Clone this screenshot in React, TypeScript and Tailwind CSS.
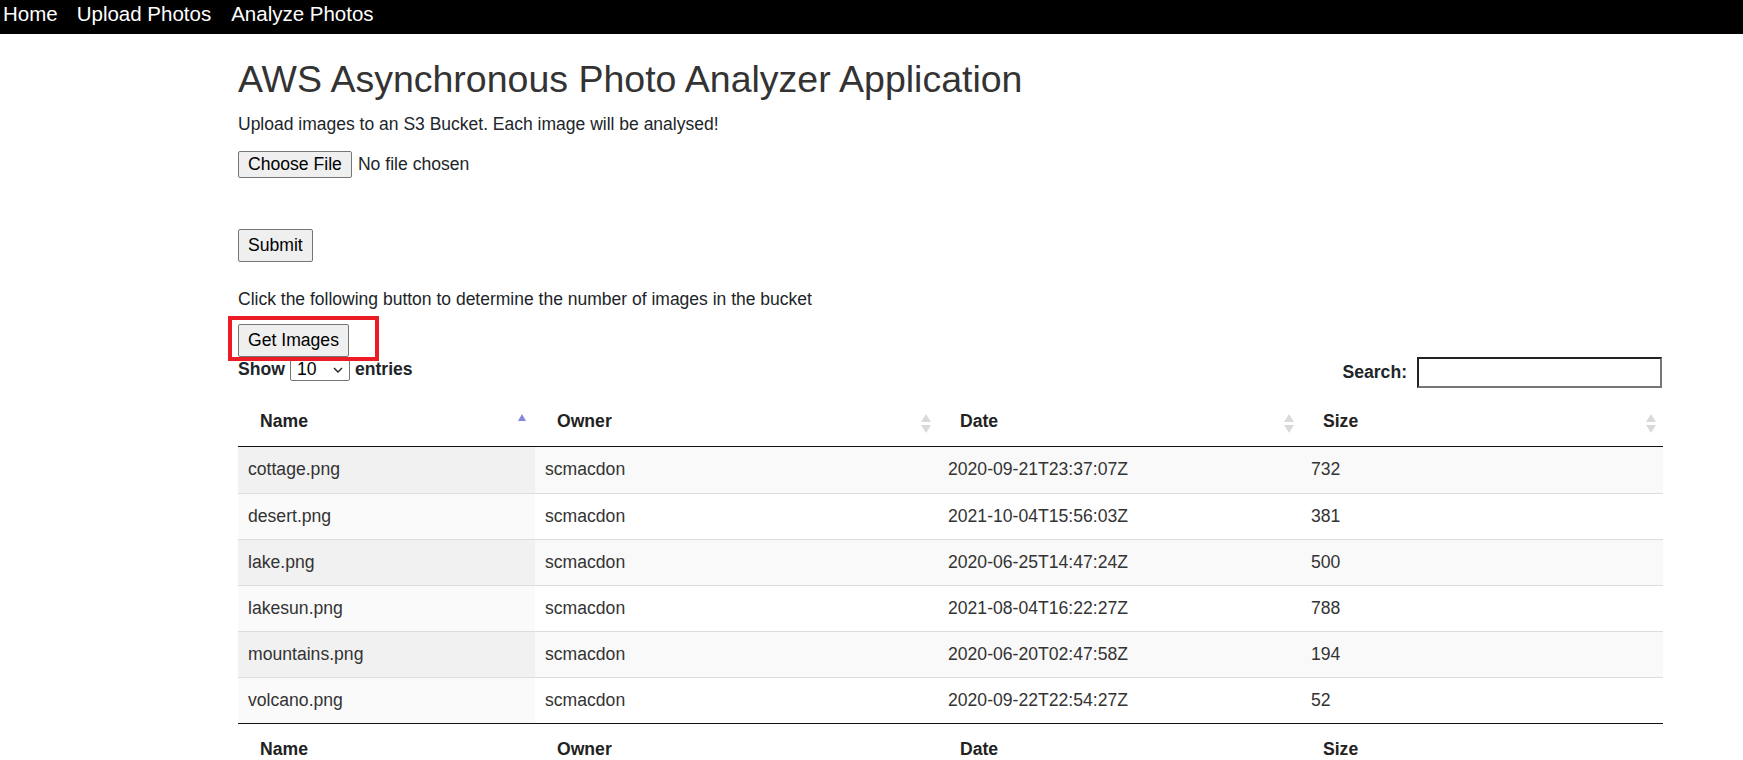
import React from "react";

type Photo = {
  name: string;
  owner: string;
  date: string;
  size: string;
};

const photos: Photo[] = [
  { name: "cottage.png", owner: "scmacdon", date: "2020-09-21T23:37:07Z", size: "732" },
  { name: "desert.png", owner: "scmacdon", date: "2021-10-04T15:56:03Z", size: "381" },
  { name: "lake.png", owner: "scmacdon", date: "2020-06-25T14:47:24Z", size: "500" },
  { name: "lakesun.png", owner: "scmacdon", date: "2021-08-04T16:22:27Z", size: "788" },
  { name: "mountains.png", owner: "scmacdon", date: "2020-06-20T02:47:58Z", size: "194" },
  { name: "volcano.png", owner: "scmacdon", date: "2020-09-22T22:54:27Z", size: "52" },
];

function SortBoth() {
  return (
    <svg className="absolute right-[7px] top-[13px]" width="10" height="19" viewBox="0 0 10 19">
      <polygon points="5,0 10,8 0,8" fill="#dadada" />
      <polygon points="0,11 10,11 5,19" fill="#dadada" />
    </svg>
  );
}

function SortAsc() {
  return (
    <svg className="absolute right-[9px] top-[13px]" width="8" height="7" viewBox="0 0 8 7">
      <polygon points="4,0 8,7 0,7" fill="#8487dc" />
    </svg>
  );
}

function Btn({ children, className = "" }: { children: React.ReactNode; className?: string }) {
  return (
    <button
      className={
        "rounded-[2px] border border-[#767676] bg-[#efefef] px-[9px] text-[17.6px] leading-[21px] text-black " +
        className
      }
    >
      {children}
    </button>
  );
}

export default function App() {
  const headers = ["Name", "Owner", "Date", "Size"];

  return (
    <div className="min-h-screen bg-white font-['Liberation_Sans',Arial,sans-serif] text-[#212529]">
      <nav className="flex h-[34px] items-start bg-black pt-[2px] text-[20.5px] leading-[23px] text-white">
        <a className="ml-[3px]" href="#">Home</a>
        <a className="ml-[19px]" href="#">Upload Photos</a>
        <a className="ml-[20px]" href="#">Analyze Photos</a>
      </nav>

      <main className="ml-[238px] w-[1425px]">
        <h1 className="mt-[25px] text-[37.5px] font-normal leading-[40px] text-[#333]">
          AWS Asynchronous Photo Analyzer Application
        </h1>
        <p className="mt-[15px] text-[17.5px] leading-[21px]">
          Upload images to an S3 Bucket. Each image will be analysed!
        </p>

        <div className="mt-[16px] flex items-center text-[17.6px] leading-[21px]">
          <Btn className="py-[2px]">Choose File</Btn>
          <span className="ml-[6px]">No file chosen</span>
        </div>

        <div className="mt-[51px]">
          <Btn className="py-[5px]">Submit</Btn>
        </div>

        <p className="mt-[27px] text-[17.5px] leading-[21px]">
          Click the following button to determine the number of images in the bucket
        </p>

        <div className="relative mt-[14px] inline-block">
          <Btn className="py-[5px]">Get Images</Btn>
          <div className="pointer-events-none absolute -bottom-[4px] -left-[10px] -right-[30px] -top-[8px] border-4 border-[#ec1c24]" />
        </div>

        <div className="flex items-start justify-between text-[17.6px] leading-[21px]">
          <div className="mt-[1px] flex items-center font-bold">
            <span>Show</span>
            <div className="ml-[5px] flex h-[23px] w-[60px] items-center justify-between rounded-[2px] border border-[#767676] bg-white pl-[6px] pr-[6px] font-normal text-black">
              <span>10</span>
              <svg width="10" height="6" viewBox="0 0 10 6">
                <polyline points="1,1 5,5 9,1" fill="none" stroke="#222" strokeWidth="1.4" />
              </svg>
            </div>
            <span className="ml-[5px]">entries</span>
          </div>
          <div className="flex items-center font-bold">
            <label>Search:</label>
            <input
              className="ml-[10px] mr-[1px] h-[31px] w-[245px] border-2 border-b-[#767676] border-l-[#222] border-r-[#767676] border-t-[#222] bg-white outline-none"
              type="text"
            />
          </div>
        </div>

        <table className="mt-[13px] w-full table-fixed border-collapse text-[17.6px] leading-[21px] text-[#333]">
          <colgroup>
            <col className="w-[297px]" />
            <col className="w-[403px]" />
            <col className="w-[363px]" />
            <col className="w-[362px]" />
          </colgroup>
          <thead>
            <tr>
              {headers.map((h, i) => (
                <th
                  key={h}
                  className="relative border-b border-[#111] pb-[15px] pl-[22px] pt-[10px] text-left font-bold leading-[20px] text-[#222]"
                >
                  {h}
                  {i === 0 ? <SortAsc /> : <SortBoth />}
                </th>
              ))}
            </tr>
          </thead>
          <tbody>
            {photos.map((p, i) => {
              const odd = i % 2 === 0;
              const border = i === 0 ? "" : "border-t border-[#ddd]";
              const pad = i === 0 ? "px-[10px] pt-[12px] pb-[13px]" : "px-[10px] py-[12px]";
              const rest = odd ? "bg-[#f9f9f9]" : "bg-white";
              return (
                <tr key={p.name}>
                  <td className={`${border} ${odd ? "bg-[#f1f1f1]" : "bg-[#fafafa]"} ${pad}`}>{p.name}</td>
                  <td className={`${border} ${rest} ${pad}`}>{p.owner}</td>
                  <td className={`${border} ${rest} ${pad}`}>{p.date}</td>
                  <td className={`${border} ${rest} ${pad}`}>{p.size}</td>
                </tr>
              );
            })}
          </tbody>
          <tfoot>
            <tr>
              {headers.map((h) => (
                <th
                  key={h}
                  className="border-t border-[#111] pb-[6px] pl-[22px] pt-[15px] text-left font-bold leading-[20px] text-[#222]"
                >
                  {h}
                </th>
              ))}
            </tr>
          </tfoot>
        </table>
      </main>
    </div>
  );
}
